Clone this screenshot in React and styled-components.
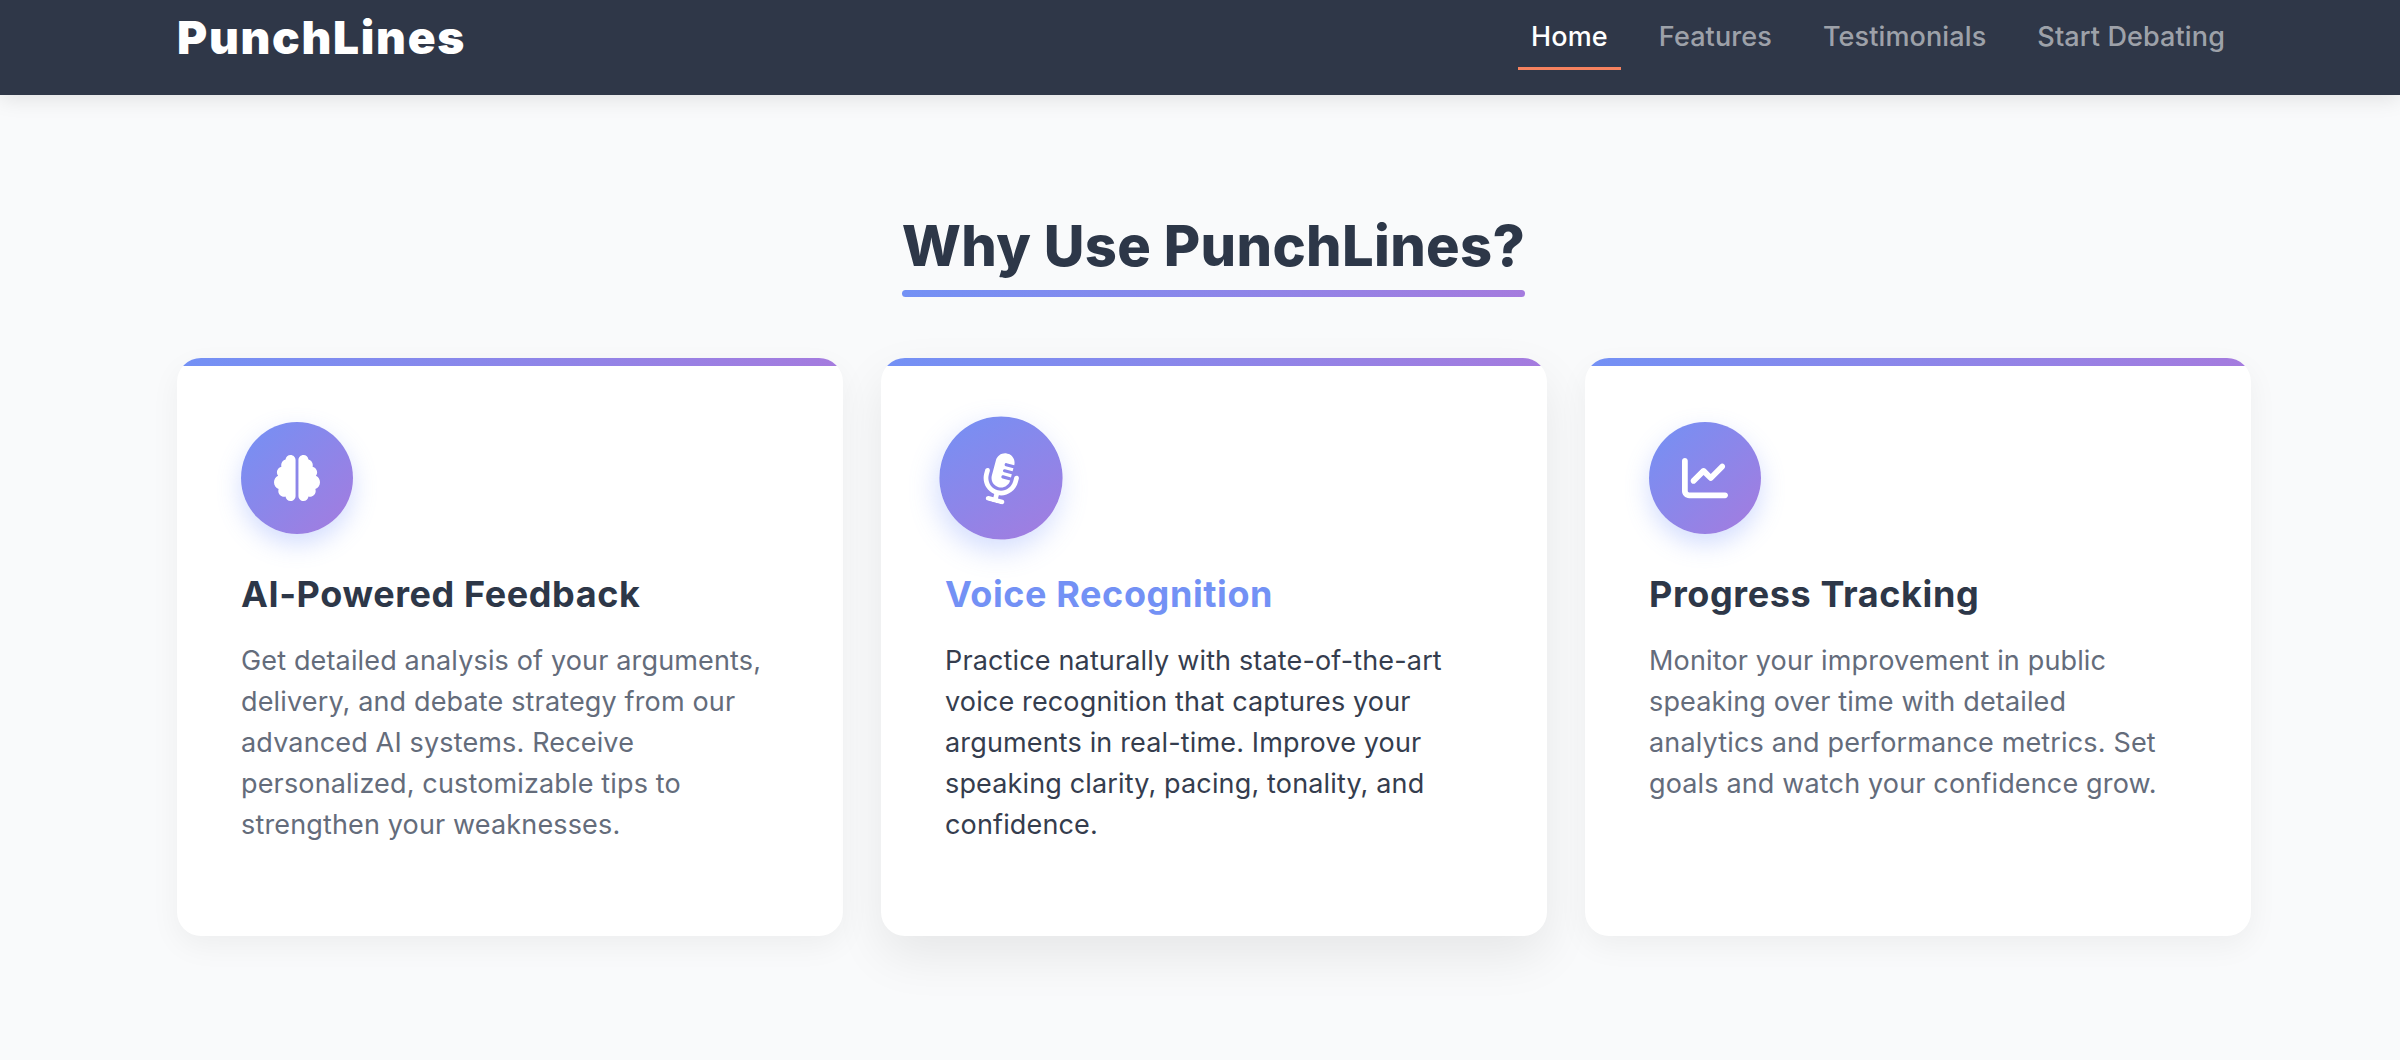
import React from "react";
import styled, { createGlobalStyle } from "styled-components";
import { FaBrain, FaMicrophoneLines, FaChartLine } from "react-icons/fa6";

const Global = createGlobalStyle`
  html, body { margin: 0; padding: 0; background: #f9fafb; }
  body { font-family: "Inter", "Liberation Sans", sans-serif; height: 1060px; overflow: hidden; }
  * { box-sizing: border-box; }
`;

const gradient = "#7391f5, #a57bde";

const Nav = styled.header`
  height: 95px;
  background: #2f3748;
  box-shadow: 0 4px 20px rgba(0, 0, 0, 0.1);
  padding: 0 162px 0 177px;
  display: flex;
  align-items: center;
  justify-content: space-between;
`;
const Logo = styled.div`
  font-size: 46px;
  font-weight: 900;
  color: #fff;
  letter-spacing: 1.7px;
  line-height: 1;
  margin-top: -22px;
`;
const Links = styled.nav`
  display: flex;
  gap: 25px;
  margin-top: -22px;
`;
const NavLink = styled.a`
  position: relative;
  padding: 8px 13px;
  font-size: 27px;
  line-height: 34px;
  font-weight: 500;
  letter-spacing: 0.12px;
  color: ${(p) => (p.$active ? "#fff" : "rgba(255,255,255,0.55)")};
  ${(p) =>
    p.$active &&
    `&::after { content: ""; position: absolute; left: 0; right: 0; bottom: -8px; height: 3px; background: #f6825f; }`}
`;
const Main = styled.main`
  padding: 0 150px 0 177px;
`;
const TitleWrap = styled.div`
  display: flex;
  justify-content: center;
  padding-top: 119px;
  margin-bottom: 61px;
`;
const Title = styled.h2`
  position: relative;
  margin: 0;
  font-size: 56px;
  line-height: 64px;
  font-weight: 800;
  letter-spacing: 0.33px;
  color: #2d3748;
  padding-bottom: 19px;
  &::after {
    content: "";
    position: absolute;
    left: 0;
    right: 0;
    bottom: 0;
    height: 7px;
    border-radius: 4px;
    background: linear-gradient(90deg, ${gradient});
  }
`;
const Grid = styled.div`
  display: grid;
  grid-template-columns: repeat(3, 666px);
  gap: 38px;
`;
const Card = styled.article`
  position: relative;
  overflow: hidden;
  height: 578px;
  background: #fff;
  border-radius: 24px;
  padding: 64px 72px 64px 64px;
  box-shadow: ${(p) =>
    p.$hover ? "0 20px 50px rgba(0,0,0,0.08)" : "0 10px 30px rgba(0,0,0,0.05)"};
  &::before {
    content: "";
    position: absolute;
    left: 0;
    right: 0;
    top: 0;
    height: 8px;
    background: linear-gradient(90deg, ${gradient});
  }
`;
const IconCircle = styled.div`
  width: 112px;
  height: 112px;
  border-radius: 50%;
  display: flex;
  align-items: center;
  justify-content: center;
  color: #fff;
  font-size: 46px;
  background: linear-gradient(135deg, ${gradient});
  box-shadow: 0 10px 25px rgba(110, 142, 251, 0.3);
  transform: ${(p) => (p.$hover ? "scale(1.1) rotate(15deg)" : "none")};
`;
const CardTitle = styled.h3`
  margin: 36px 0 0;
  font-size: 36px;
  line-height: 48px;
  font-weight: 700;
  letter-spacing: 0.6px;
  color: ${(p) => (p.$hover ? "#7391f5" : "#2d3748")};
`;
const CardText = styled.p`
  margin: 22px 0 0;
  font-size: 27px;
  line-height: 41px;
  font-weight: 400;
  letter-spacing: 0.15px;
  color: ${(p) => (p.$hover ? "#353d4e" : "#646c7b")};
`;

const cards = [
  {
    icon: <FaBrain />,
    title: "AI-Powered Feedback",
    text: "Get detailed analysis of your arguments, delivery, and debate strategy from our advanced AI systems. Receive personalized, customizable tips to strengthen your weaknesses.",
  },
  {
    icon: <FaMicrophoneLines />,
    title: "Voice Recognition",
    text: "Practice naturally with state-of-the-art voice recognition that captures your arguments in real-time. Improve your speaking clarity, pacing, tonality, and confidence.",
    hover: true,
  },
  {
    icon: <FaChartLine />,
    title: "Progress Tracking",
    text: "Monitor your improvement in public speaking over time with detailed analytics and performance metrics. Set goals and watch your confidence grow.",
  },
];

export default function App() {
  return (
    <>
      <Global />
      <Nav>
        <Logo>PunchLines</Logo>
        <Links>
          <NavLink $active>Home</NavLink>
          <NavLink>Features</NavLink>
          <NavLink>Testimonials</NavLink>
          <NavLink>Start Debating</NavLink>
        </Links>
      </Nav>
      <Main>
        <TitleWrap>
          <Title>Why Use PunchLines?</Title>
        </TitleWrap>
        <Grid>
          {cards.map((c) => (
            <Card key={c.title} $hover={c.hover}>
              <IconCircle $hover={c.hover}>{c.icon}</IconCircle>
              <CardTitle $hover={c.hover}>{c.title}</CardTitle>
              <CardText $hover={c.hover}>{c.text}</CardText>
            </Card>
          ))}
        </Grid>
      </Main>
    </>
  );
}
